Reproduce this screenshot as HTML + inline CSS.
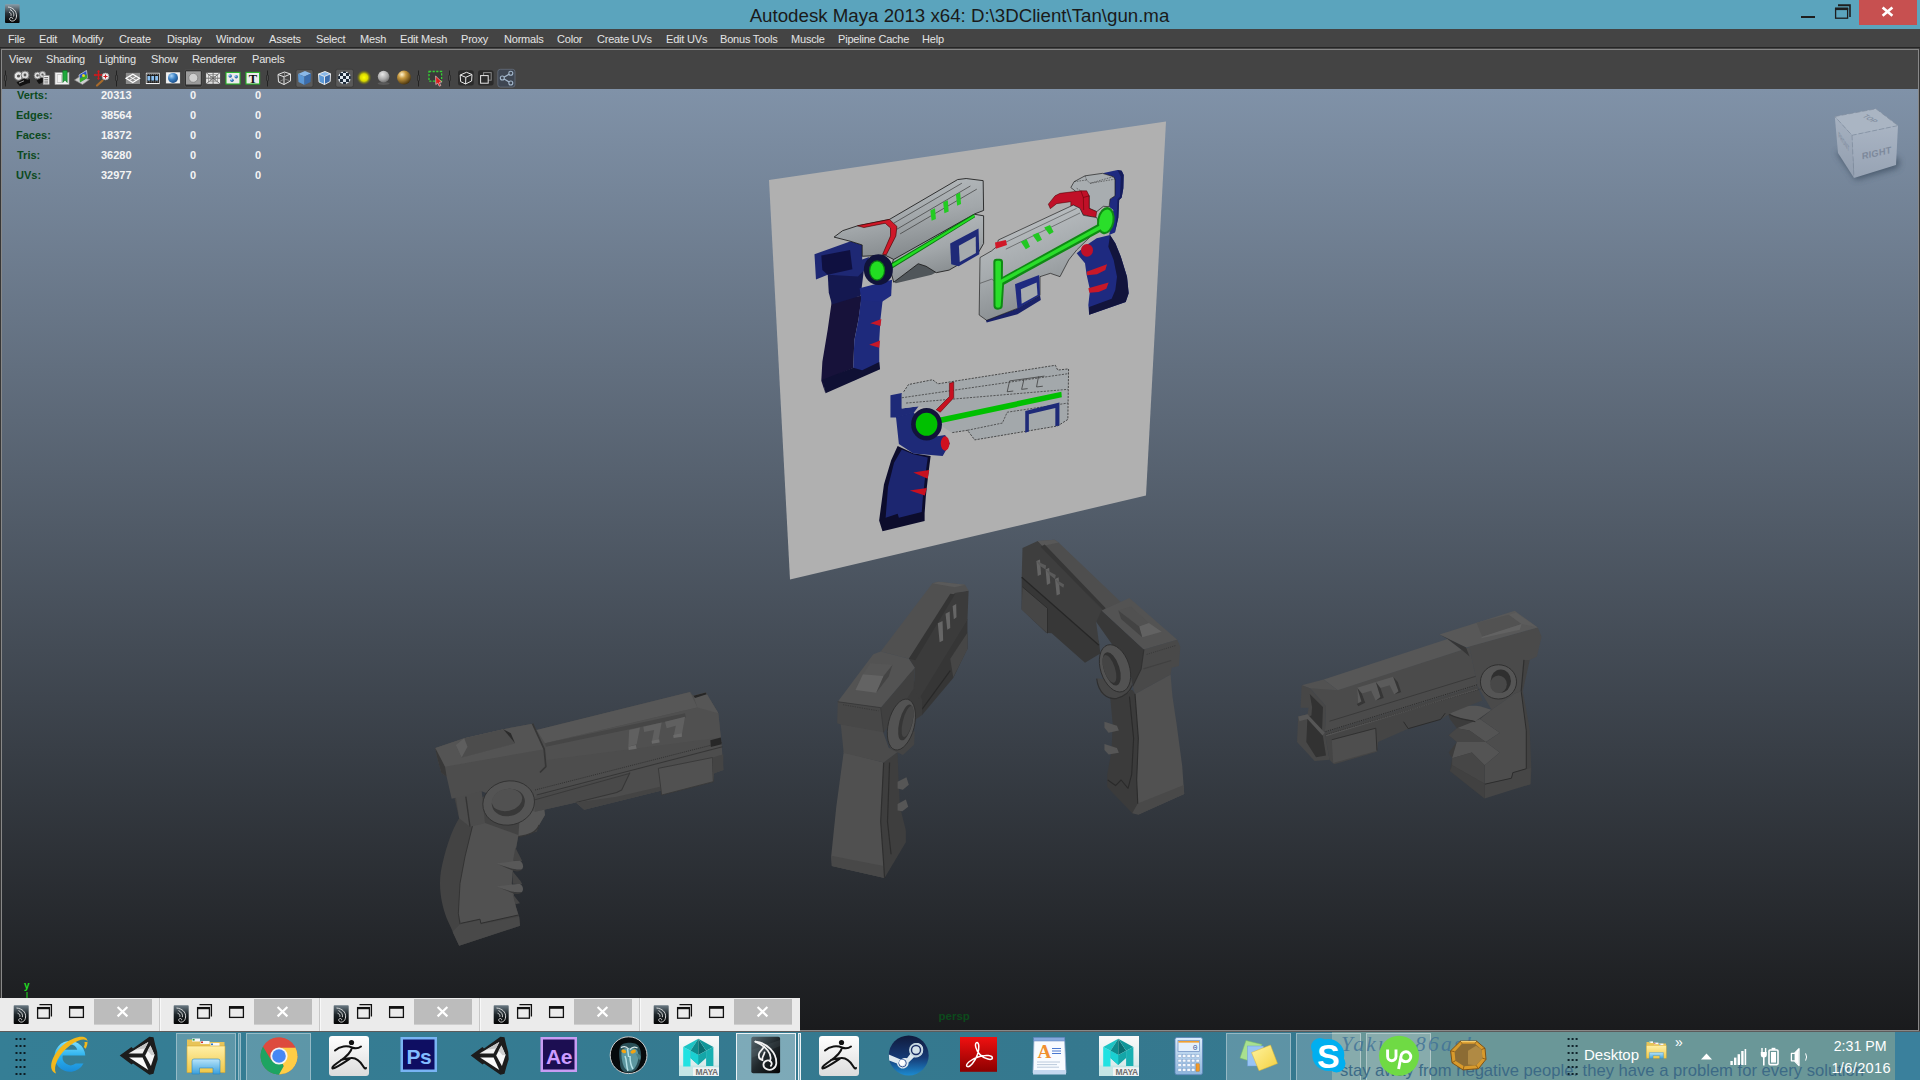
<!DOCTYPE html>
<html>
<head>
<meta charset="utf-8">
<title>Autodesk Maya 2013 x64: D:\3DClient\Tan\gun.ma</title>
<style>
html,body{margin:0;padding:0;}
body{width:1920px;height:1080px;overflow:hidden;position:relative;background:#444;font-family:"Liberation Sans",sans-serif;}
#root{position:absolute;left:0;top:0;width:1920px;height:1080px;overflow:hidden;}
.abs{position:absolute;}
#titlebar{left:0;top:0;width:1920px;height:29px;background:#5ba4bd;}
#title{left:0;top:4px;width:1919px;text-align:center;font-size:18.7px;line-height:24px;color:#1a1a1a;white-space:pre;}
#menubar{left:0;top:29px;width:1920px;height:19px;background:#444444;}
.mi{position:absolute;font-size:11px;line-height:14px;color:#e4e4e4;white-space:nowrap;letter-spacing:-0.2px;}
#menubar .mi{top:3px;}
#panelframe{left:1px;top:49px;width:1916px;height:980px;background:#444444;border:1px solid #888888;}
#mbline{left:0;top:47px;width:1920px;height:1px;background:#262626;}
#panelmenu .mi{top:52px;}
#viewport{left:2px;top:89px;width:1916px;height:941px;background:linear-gradient(to bottom,#8092a8,#1a1b1d);overflow:hidden;}
#vpsvg{left:0;top:0;width:1920px;height:1080px;}
#taskbar{left:0;top:1032px;width:1920px;height:48px;background:linear-gradient(to right,#357e95,#35788e 55%,#377a92);}
.tbtn{position:absolute;top:1033px;height:47px;box-sizing:border-box;background:rgba(255,255,255,0.2);border:1px solid rgba(255,255,255,0.35);border-bottom:none;}
.tbtn.act{background:rgba(255,255,255,0.36);border-color:rgba(255,255,255,0.85);}
.st{position:absolute;font-size:11px;line-height:14px;font-weight:bold;white-space:nowrap;}
.sl{color:#0b4a1c;}
.sv{color:#f4f4f4;}
</style>
</head>
<body>
<div id="root">
<!-- TITLE BAR -->
<div id="titlebar" class="abs"></div>
<div id="title" class="abs">Autodesk Maya 2013 x64: D:\3DClient\Tan\gun.ma</div>
<!-- window controls -->
<div class="abs" style="left:1859px;top:0;width:58px;height:25px;background:#c75050;"></div>
<svg class="abs" style="left:1790px;top:0" width="130" height="29" viewBox="1790 0 130 29">
<rect x="1801" y="16" width="14" height="2" fill="#1e1e1e"/>
<path d="M1838,5 H1850 V17 M1838,5.5 H1850" fill="none" stroke="#1e1e1e" stroke-width="1.6"/>
<rect x="1835.6" y="8.6" width="12" height="9.6" fill="none" stroke="#1e1e1e" stroke-width="1.3"/>
<rect x="1835" y="7.5" width="13.2" height="2.6" fill="#1e1e1e"/>
<path d="M1882.6,7.4 L1892.4,15.8 M1892.4,7.4 L1882.6,15.8" stroke="#ffffff" stroke-width="2.6"/>
</svg>
<!-- maya title icon -->
<svg class="abs" style="left:4px;top:3px" width="17" height="21" viewBox="0 0 17 21">
<defs><linearGradient id="mayaIc" x1="0" y1="0" x2="0" y2="1"><stop offset="0" stop-color="#8c9ca6"/><stop offset="0.5" stop-color="#2a3238"/><stop offset="1" stop-color="#050505"/></linearGradient></defs>
<rect x="1" y="1.3" width="14.6" height="18.6" rx="1" fill="url(#mayaIc)"/>
<path d="M4,4 C9,4.5 12.5,8 12.5,13 C12.5,16.5 10,18.5 7.5,18 C5.5,17.5 5,15.5 6.5,14.5 C8,14 9,15 8.6,16 M6,6.5 C9,8 10.5,10.5 9.5,13.5 M5,9 C6.5,9.5 7.5,11 7,12.8" fill="none" stroke="#e8e8e8" stroke-width="0.9"/>
</svg>
<!-- MENUBAR -->
<div id="menubar" class="abs">
<span class="mi" style="left:8px">File</span>
<span class="mi" style="left:39px">Edit</span>
<span class="mi" style="left:72px">Modify</span>
<span class="mi" style="left:119px">Create</span>
<span class="mi" style="left:167px">Display</span>
<span class="mi" style="left:216px">Window</span>
<span class="mi" style="left:269px">Assets</span>
<span class="mi" style="left:316px">Select</span>
<span class="mi" style="left:360px">Mesh</span>
<span class="mi" style="left:400px">Edit Mesh</span>
<span class="mi" style="left:461px">Proxy</span>
<span class="mi" style="left:504px">Normals</span>
<span class="mi" style="left:557px">Color</span>
<span class="mi" style="left:597px">Create UVs</span>
<span class="mi" style="left:666px">Edit UVs</span>
<span class="mi" style="left:720px">Bonus Tools</span>
<span class="mi" style="left:791px">Muscle</span>
<span class="mi" style="left:838px">Pipeline Cache</span>
<span class="mi" style="left:922px">Help</span>
</div>
<!-- PANEL FRAME -->
<div id="mbline" class="abs"></div>
<div class="abs" style="left:0;top:48px;width:1px;height:983px;background:#363636;"></div><div class="abs" style="left:1919px;top:48px;width:1px;height:983px;background:#363636;"></div>
<div id="panelframe" class="abs"></div>
<div id="panelmenu">
<span class="mi" style="left:9px">View</span>
<span class="mi" style="left:46px">Shading</span>
<span class="mi" style="left:99px">Lighting</span>
<span class="mi" style="left:151px">Show</span>
<span class="mi" style="left:192px">Renderer</span>
<span class="mi" style="left:252px">Panels</span>
</div>
<!-- TOOLBAR ICONS -->
<svg class="abs" style="left:0;top:60px" width="540" height="30" viewBox="0 60 540 30">
<defs>
<radialGradient id="gBlue" cx="0.35" cy="0.3" r="0.75"><stop offset="0" stop-color="#a8d4f8"/><stop offset="0.5" stop-color="#3a80c4"/><stop offset="1" stop-color="#1a4c86"/></radialGradient>
<radialGradient id="gYel" cx="0.5" cy="0.5" r="0.5"><stop offset="0" stop-color="#ffff00"/><stop offset="0.5" stop-color="#d8d800"/><stop offset="1" stop-color="#6a6a10" stop-opacity="0"/></radialGradient>
<radialGradient id="gGrey" cx="0.4" cy="0.3" r="0.75"><stop offset="0" stop-color="#e8e8e8"/><stop offset="0.6" stop-color="#a8a8a8"/><stop offset="1" stop-color="#6a6a6a"/></radialGradient>
<radialGradient id="gGold" cx="0.35" cy="0.28" r="0.8"><stop offset="0" stop-color="#fff4d0"/><stop offset="0.35" stop-color="#c89a40"/><stop offset="1" stop-color="#3a2808"/></radialGradient>
</defs>
<!-- separators -->
<g stroke="#222" stroke-width="1" fill="none">
<path d="M5.5,70.5V86.5M116.5,70.5V86.5M267.5,70.5V86.5M418.5,70.5V86.5M449.5,70.5V86.5"/>
</g>
<g fill="#555" stroke="#222" stroke-width="0.8">
<rect x="4.6" y="75" width="1.8" height="6" rx="0.9"/><rect x="115.6" y="75" width="1.8" height="6" rx="0.9"/><rect x="266.6" y="75" width="1.8" height="6" rx="0.9"/><rect x="417.6" y="75" width="1.8" height="6" rx="0.9"/><rect x="448.6" y="75" width="1.8" height="6" rx="0.9"/>
</g>
<!-- camera -->
<g>
<circle cx="18.5" cy="76" r="4.3" fill="#e6e6e6" stroke="#777" stroke-width="1"/><circle cx="18.5" cy="76" r="1.6" fill="#555"/>
<circle cx="25" cy="75" r="4" fill="#d8d8d8" stroke="#777" stroke-width="1"/><circle cx="25" cy="75" r="1.4" fill="#555"/>
<path d="M16.5,82.5 L24.5,78.5 L27.5,80 L30,79 L30,83 L27.5,83.5 L20,86.5 Z" fill="#111"/>
<path d="M19,83 L24,80.8" stroke="#999" stroke-width="1"/>
</g>
<!-- camera + doc -->
<g>
<circle cx="37.5" cy="75.5" r="3.4" fill="#e0e0e0" stroke="#777" stroke-width="0.9"/><circle cx="37.5" cy="75.5" r="1.2" fill="#555"/>
<circle cx="42.5" cy="74.5" r="3.2" fill="#d4d4d4" stroke="#777" stroke-width="0.9"/><circle cx="42.5" cy="74.5" r="1.1" fill="#555"/>
<path d="M36.5,80.5 L42,77.8 L44,79 L44,81.8 L39,84 Z" fill="#111"/>
<rect x="43.2" y="75.5" width="6" height="9" fill="#f2f2f2" stroke="#888" stroke-width="0.6"/>
<path d="M44.3,77.5h3.8M44.3,79.3h3.8M44.3,81.1h3.8M44.3,82.9h3.8" stroke="#555" stroke-width="0.8"/>
</g>
<!-- bookmark -->
<g>
<rect x="55" y="72.5" width="14" height="12" fill="#f4f4f4" stroke="#999" stroke-width="0.7"/>
<rect x="57.3" y="74.5" width="4.2" height="8" fill="none" stroke="#c8c8c8" stroke-width="1"/>
<path d="M62.8,70.5 L67.2,70.5 L67.2,82.5 L65,80 L62.8,82.5 Z" fill="#1ea83c" stroke="#0d6a22" stroke-width="0.6"/>
</g>
<!-- image plane -->
<g>
<path d="M74.5,80 L79,77 L89.5,79.5 L82.5,84.5 Z" fill="#cfcfcf" stroke="#888" stroke-width="0.6"/>
<path d="M79,75 L86.5,70.5 L87.5,78 L80,82.5 Z" fill="#2c54c8" stroke="#ddd" stroke-width="0.7"/>
<path d="M79.6,78.5 L86.9,74.2 L87.5,78 L80,82.5 Z" fill="#3aa82e"/>
<circle cx="83.5" cy="75.6" r="1.5" fill="#e8d820"/>
</g>
<!-- red cross + magnifier -->
<g>
<path d="M98.5,70.5V79.5M94,75H103" stroke="#d0181c" stroke-width="1.4"/>
<path d="M98.5,70 L97,72 H100 Z M98.5,80 L97,78 H100 Z M93.6,75 L95.6,73.5 V76.5 Z M103.4,75 L101.4,73.5 V76.5 Z" fill="#d0181c"/>
<path d="M102.5,80.5 L97,85.5" stroke="#a86a2a" stroke-width="2.2" stroke-linecap="round"/>
<circle cx="105.5" cy="76.5" r="3.4" fill="#f6f6f6" stroke="#999" stroke-width="0.8"/>
<path d="M105.5,74.4V78.6M103.4,76.5H107.6" stroke="#d0181c" stroke-width="1.2"/>
</g>
<!-- grid -->
<g>
<rect x="125.3" y="72.3" width="15" height="12" fill="#8c8c8c" stroke="#333" stroke-width="0.6"/>
<path d="M126,78.3 L132.8,74.2 L139.6,78.3 L132.8,82.5 Z" fill="none" stroke="#fff" stroke-width="1.2"/>
<path d="M129.4,76.3 L136.2,80.4 M136.2,76.3 L129.4,80.4" stroke="#fff" stroke-width="0.9"/>
</g>
<!-- film gate -->
<g>
<rect x="145.5" y="72.3" width="14.5" height="12" fill="#f4f4f4" stroke="#333" stroke-width="0.6"/>
<rect x="146.6" y="73.6" width="12.3" height="9.4" fill="#111"/>
<rect x="147.4" y="76" width="2.8" height="4.6" fill="#8cc0f0"/><rect x="151.3" y="76" width="2.8" height="4.6" fill="#8cc0f0"/><rect x="155.2" y="76" width="2.8" height="4.6" fill="#8cc0f0"/>
<path d="M147.3,74.7h10.8M147.3,81.9h10.8" stroke="#ddd" stroke-width="0.8" stroke-dasharray="1 1"/>
</g>
<!-- blue ball -->
<g>
<rect x="165.8" y="72" width="14.4" height="11.8" fill="#f2f2f2" stroke="#333" stroke-width="0.5"/>
<circle cx="173" cy="77.9" r="5" fill="url(#gBlue)"/>
</g>
<!-- selected circle -->
<g>
<rect x="184.6" y="69.8" width="17.6" height="17.2" rx="2" fill="#2e2e2e" stroke="#5a5a5a" stroke-width="0.6"/>
<rect x="186" y="71.3" width="14.8" height="13.2" fill="#9c9c9c"/>
<circle cx="193.3" cy="77.8" r="4.5" fill="#cfcfcf" stroke="#777" stroke-width="0.7"/>
</g>
<!-- field chart -->
<g>
<rect x="205.8" y="72.3" width="14.6" height="11.8" fill="#e8e8e8" stroke="#333" stroke-width="0.6"/>
<path d="M206,72.5 L220.2,84 M220.2,72.5 L206,84 M213.1,72.4V84 M206,78.2H220.3" stroke="#555" stroke-width="0.8"/>
<rect x="208.6" y="74.6" width="9" height="7.2" fill="none" stroke="#777" stroke-width="0.6"/>
<rect x="210.8" y="76.3" width="4.6" height="3.8" fill="none" stroke="#777" stroke-width="0.6"/>
</g>
<!-- green box balls -->
<g>
<rect x="226" y="72.4" width="14" height="11.6" fill="#ececec" stroke="#28b428" stroke-width="1.1"/>
<circle cx="230.2" cy="76" r="1.7" fill="url(#gBlue)"/><circle cx="236.2" cy="76.8" r="1.7" fill="url(#gBlue)"/><circle cx="232" cy="80.2" r="1.7" fill="url(#gBlue)"/>
</g>
<!-- green box T -->
<g>
<rect x="246" y="72.4" width="13.6" height="11.6" fill="#ececec" stroke="#28b428" stroke-width="1.1"/>
<text x="252.8" y="82.6" font-family="Liberation Serif,serif" font-size="12.5" font-weight="bold" text-anchor="middle" fill="#111">T</text>
</g>
<!-- wire cube -->
<g fill="none" stroke="#e4e4e4" stroke-width="1">
<path d="M278,74.5 L284.5,72 L290.5,74 L290.5,81 L284,84.5 L278.5,82 Z"/>
<path d="M278,74.5 L284,76.8 L290.5,74 M284,76.8 L284,84.5" />
<path d="M284.5,72 L284.5,79 L278.5,82 M284.5,79 L290.5,81" stroke="#9a9a9a" stroke-width="0.7"/>
</g>
<!-- shaded cube selected -->
<g>
<rect x="296" y="69.6" width="17" height="17.6" rx="2" fill="#5a5a5a" stroke="#333" stroke-width="0.6"/>
<path d="M298,74 L305,71 L311,73.5 L304.5,76.5 Z" fill="#8ab8e8"/>
<path d="M298,74 L304.5,76.5 L304.5,85 L298.5,82 Z" fill="#5c98d6"/>
<path d="M304.5,76.5 L311,73.5 L310.5,82 L304.5,85 Z" fill="#3a6cac"/>
</g>
<!-- wire on shaded cube -->
<g>
<path d="M318.5,74 L325,71.5 L330.5,73.8 L324.5,76.5 Z" fill="#8ab8e8"/>
<path d="M318.5,74 L324.5,76.5 L324.5,84.5 L319,82 Z" fill="#5c98d6"/>
<path d="M324.5,76.5 L330.5,73.8 L330.2,81.5 L324.5,84.5 Z" fill="#3a6cac"/>
<path d="M318.5,74 L325,71.5 L330.5,73.8 L330.2,81.5 L324.5,84.5 L319,82 Z M318.5,74 L324.5,76.5 L330.5,73.8 M324.5,76.5 V84.5" fill="none" stroke="#f4f4f4" stroke-width="0.9"/>
</g>
<!-- textured ball -->
<g>
<rect x="335.7" y="69.3" width="17.7" height="17.8" rx="2" fill="#5a5a5a" stroke="#333" stroke-width="0.6"/>
<circle cx="344.4" cy="77.8" r="6.8" fill="#dde6ee"/>
<path d="M340,73 h3 v3 h-3 Z M346,73 h3 v3 h-3 Z M343,76 h3 v3 h-3 Z M349,76 h2.2 v3 h-2.2 Z M337.6,76 h2.4 v3 h-2.4 Z M340,79 h3 v3 h-3 Z M346,79 h3 v3 h-3 Z M343,82 h3 v2.6 h-3 Z M343,71 h3 v2 h-3 Z" fill="#1c2a3a"/>
<circle cx="344.4" cy="77.8" r="6.8" fill="none" stroke="#5a5a5a" stroke-width="1"/>
</g>
<!-- yellow light -->
<circle cx="364" cy="77.5" r="7.5" fill="url(#gYel)"/>
<!-- grey ball -->
<ellipse cx="383.6" cy="83.5" rx="6" ry="1.5" fill="#5a5a5a"/>
<circle cx="383.6" cy="76.6" r="5.8" fill="url(#gGrey)"/>
<!-- gold ball -->
<circle cx="404" cy="77.6" r="7" fill="url(#gGold)"/>
<!-- select dashed -->
<g>
<rect x="429" y="71.5" width="12.6" height="9.6" fill="#3a3a3a" stroke="#34d234" stroke-width="1.3" stroke-dasharray="2.2 1.4"/>
<path d="M435.6,76 L441.8,82 L439.4,82.4 L440.8,85.6 L439.2,86.2 L437.8,83 L435.8,84.6 Z" fill="#d81c1c" stroke="#fff" stroke-width="0.5"/>
</g>
<!-- dark cube -->
<g>
<rect x="458" y="70.3" width="15.8" height="15.2" rx="2.5" fill="#2a2a2a"/>
<path d="M460.2,75 L466.5,72.3 L472,74.5 L471.6,81 L465.6,84 L460.6,81.6 Z M460.2,75 L465.8,77.3 L472,74.5 M465.8,77.3 L465.6,84" fill="none" stroke="#e8e8e8" stroke-width="1"/>
</g>
<!-- dark 2 squares -->
<g>
<rect x="478" y="70.3" width="15.6" height="15.2" rx="2.5" fill="#2a2a2a"/>
<rect x="483.6" y="72.6" width="7.6" height="7.6" fill="none" stroke="#8a8a8a" stroke-width="1"/>
<rect x="480.6" y="75.6" width="7.6" height="7.6" fill="#2a2a2a" stroke="#e8e8e8" stroke-width="1"/>
</g>
<!-- share -->
<g>
<rect x="497.8" y="69.3" width="17.2" height="17.8" rx="2.5" fill="#3e4652" stroke="#6a7482" stroke-width="0.7"/>
<path d="M502.5,78 L510.5,73.5 M502.5,78 L510.5,82.8" stroke="#a4b8cc" stroke-width="1.2"/>
<circle cx="502.3" cy="78" r="2" fill="#3e4652" stroke="#a4b8cc" stroke-width="1.1"/>
<circle cx="510.8" cy="73.3" r="2" fill="#3e4652" stroke="#a4b8cc" stroke-width="1.1"/>
<circle cx="510.8" cy="83" r="2" fill="#3e4652" stroke="#a4b8cc" stroke-width="1.1"/>
</g>
</svg>
<!-- VIEWPORT -->
<div id="viewport" class="abs"></div>
<svg id="vpsvg" class="abs" width="1920" height="1080" viewBox="0 0 1920 1080">
<defs><clipPath id="vpclip"><rect x="2" y="89" width="1916" height="941"/></clipPath></defs>
<g clip-path="url(#vpclip)">
<!-- image plane -->
<defs>
<linearGradient id="brl1" x1="0" y1="0" x2="0.35" y2="1"><stop offset="0" stop-color="#bcc1c4"/><stop offset="0.6" stop-color="#a2a7aa"/><stop offset="1" stop-color="#858a8d"/></linearGradient>
<linearGradient id="brl2" x1="0" y1="0" x2="0.4" y2="1"><stop offset="0" stop-color="#c6cacd"/><stop offset="0.55" stop-color="#a6abae"/><stop offset="1" stop-color="#84898c"/></linearGradient>
</defs>
<polygon points="769,180 1166,121.5 1146,495.5 790,579.5" fill="#b0b0b0"/>
<!-- ===== plane gun 1 (top-left) : crop origin (800,170) scale 4.695 ===== -->
<g transform="translate(800,170) scale(0.21299)" stroke-linejoin="round">
<!-- grip back dark -->
<path d="M150,610 L290,590 L275,700 L255,800 L250,930 L110,990 L118,1045 L100,990 L105,900 L130,750 Z" fill="#17123a"/>
<!-- grip front blue -->
<path d="M288,590 L388,612 L378,700 L372,800 L372,930 L250,990 L250,930 L255,800 L275,700 Z" fill="#1e2a7c"/>
<!-- grip base -->
<path d="M105,985 L250,928 L292,940 L372,902 L376,935 L120,1048 Z" fill="#0f1034"/>
<path d="M330,720 L382,700 L378,732 Z M325,820 L376,800 L372,834 Z" fill="#c81828"/>
<!-- lower rear block -->
<path d="M130,485 L275,455 L300,470 L285,590 L150,632 L135,575 Z" fill="#141850"/>
<!-- navy rear block -->
<path d="M68,395 L238,335 L292,352 L292,420 L325,408 L302,470 L272,500 L130,492 L75,514 Z" fill="#1e2874"/>
<path d="M100,402 L235,376 L246,466 L130,492 L105,470 Z" fill="#0f1040"/>
<!-- blue collar under ring -->
<path d="M280,555 L432,515 L428,590 L385,618 L288,612 Z" fill="#1e2a80"/>
<!-- dark underside of barrel -->
<path d="M440,525 L555,438 L592,450 L640,480 L618,492 L450,532 Z" fill="#50565a"/>
<!-- lower barrel grey -->
<path d="M425,470 L440,415 L820,208 L862,215 L862,345 L835,392 L700,470 L640,482 L592,452 L555,440 L440,527 Z" fill="url(#brl1)" stroke="#1a1a1a" stroke-width="4"/>
<!-- upper slide grey -->
<path d="M160,315 L200,285 L270,262 L420,232 L740,45 L780,40 L860,50 L862,190 L820,206 L440,420 L400,400 L292,405 L292,352 L238,335 Z" fill="url(#brl1)" stroke="#1a1a1a" stroke-width="4"/>
<path d="M440,250 L760,62 M455,278 L800,75 M470,300 L830,90" stroke="#303030" stroke-width="3" fill="none"/>
<!-- navy box -->
<path d="M705,345 L838,275 L842,395 L745,452 L710,442 Z" fill="#1f2a78"/>
<path d="M746,356 L825,312 L826,390 L750,432 Z" fill="#a6abae"/>
<!-- red strap -->
<path d="M270,262 L420,232 L455,265 L450,310 L405,398 L388,396 L425,310 L425,272 L400,250 L300,270 Z" fill="#d01828" stroke="#400" stroke-width="3"/>
<!-- green vents -->
<path d="M612,190 L634,180 L638,230 L618,238 Z M672,152 L694,142 L698,195 L678,203 Z M732,115 L752,106 L756,160 L738,168 Z" fill="#22cc22"/>
<!-- green line -->
<path d="M398,456 L816,207 L822,222 L408,478 Z" fill="#0a7a10"/>
<path d="M400,461 L817,211 L820,219 L406,473 Z" fill="#22dd22"/>
<!-- pivot ring -->
<ellipse cx="368" cy="468" rx="68" ry="72" fill="#10133a"/>
<ellipse cx="362" cy="472" rx="38" ry="48" fill="#0a7a10"/>
<ellipse cx="362" cy="472" rx="32" ry="42" fill="#22dd22"/>
</g>
<!-- ===== plane gun 2 (top-right) : crop origin (970,160) scale 6 ===== -->
<g transform="translate(970,160) scale(0.1666667)" stroke-linejoin="round">
<!-- grip navy -->
<path d="M640,560 L700,510 L760,470 L840,450 L872,500 L905,580 L942,700 L952,800 L934,852 L715,928 L710,870 L720,780 L700,690 L690,620 Z" fill="#1e2a80"/>
<path d="M840,450 L872,500 L905,580 L942,700 L952,800 L934,852 L715,928 L715,882 L850,832 L872,780 L882,700 L862,600 L830,520 Z" fill="#12143c"/>
<path d="M700,670 L822,625 L812,660 L762,686 L702,692 Z M710,770 L832,735 L818,772 L772,792 L716,797 Z" fill="#c81828"/>
<ellipse cx="702" cy="542" rx="36" ry="38" fill="#c01028"/>
<!-- navy back strip -->
<path d="M795,80 L885,60 L910,65 L922,90 L920,170 L910,225 L895,240 L890,345 L870,435 L835,450 L860,300 L835,280 L840,235 L870,215 L870,115 L860,100 Z" fill="#1e2a80"/>
<path d="M885,60 L910,65 L922,90 L920,170 L910,225 L895,240 L890,345 L870,435 L880,340 L885,235 L900,220 L905,100 Z" fill="#151c5a"/>
<!-- rear top grey -->
<path d="M605,165 L625,130 L690,95 L795,80 L860,100 L870,115 L870,215 L840,235 L835,280 L800,278 L760,310 L715,290 L715,215 L680,225 Z" fill="#a8adb0" stroke="#1a1a1a" stroke-width="4"/>
<path d="M625,130 L700,120 L720,140 L860,100 M700,120 L690,95 M640,170 L715,215 M720,140 L870,115" fill="none" stroke="#222" stroke-width="3" stroke-dasharray="10 6"/>
<!-- red bracket -->
<path d="M470,265 L510,215 L540,200 L665,185 L700,185 L715,215 L715,290 L760,310 L755,345 L730,345 L660,320 L655,295 L605,280 L605,250 L520,262 L482,292 Z" fill="#c01028" stroke="#400" stroke-width="3"/>
<path d="M665,185 L680,225 L715,215 M680,225 L682,300" fill="none" stroke="#500" stroke-width="3"/>
<!-- navy bottom strip -->
<path d="M95,960 L280,892 L420,812 L425,840 L285,925 L100,975 Z" fill="#1a2268"/>
<!-- main barrel grey -->
<path d="M60,585 L130,545 L160,520 L170,480 L620,270 L660,290 L680,332 L760,345 L782,400 L740,442 L640,540 L592,600 L540,700 L482,680 L420,700 L420,812 L280,892 L100,962 L55,930 Z" fill="url(#brl2)" stroke="#1a1a1a" stroke-width="4"/>
<path d="M200,500 L640,290 M215,535 L660,318" stroke="#303030" stroke-width="3" fill="none"/>
<path d="M60,740 L130,715 L200,760" stroke="#303030" stroke-width="3" fill="none"/>
<!-- small red block -->
<path d="M150,495 L215,480 L222,510 L155,532 Z" fill="#d01828"/>
<!-- navy box -->
<path d="M270,745 L415,690 L420,812 L285,892 Z" fill="#1e2a80"/>
<path d="M305,775 L400,735 L405,810 L310,862 Z" fill="#a6abae"/>
<!-- green vents -->
<path d="M305,490 L340,475 L360,520 L335,535 Z M375,450 L410,435 L432,478 L405,492 Z M445,405 L480,390 L502,432 L476,447 Z" fill="#22c822"/>
<!-- green T glow -->
<path d="M140,612 Q140,592 160,592 L178,592 Q198,592 198,612 L197,700 L790,372 L805,418 L204,748 L196,878 Q194,898 168,898 Q142,898 141,876 Z" fill="#0f8a14"/>
<ellipse cx="815" cy="364" rx="52" ry="82" transform="rotate(10 815 364)" fill="#0f8a14"/>
<path d="M152,614 Q152,604 162,604 L176,604 Q186,604 186,614 L185,718 L792,386 L800,406 L194,736 L184,874 Q183,886 168,886 Q154,886 153,874 Z" fill="#2ade2a"/>
<ellipse cx="815" cy="364" rx="40" ry="68" transform="rotate(10 815 364)" fill="#2ade2a"/>
</g>
<!-- ===== plane gun 3 (bottom) : crop origin (740,340) scale 4.1543 ===== -->
<g transform="translate(740,340) scale(0.240714)" stroke-linejoin="round">
<!-- grip -->
<path d="M655,440 L720,470 L792,482 L782,560 L772,650 L767,720 L767,752 L592,794 L578,750 L598,600 L628,500 Z" fill="#0c0c2c"/>
<path d="M672,455 L720,475 L780,488 L770,560 L760,650 L755,715 L660,738 L655,722 L605,738 L615,610 L640,510 Z" fill="#1c2670"/>
<path d="M720,550 L786,540 L780,576 Z M705,625 L776,615 L768,646 Z" fill="#c81020"/>
<!-- navy collar -->
<path d="M648,320 L720,300 L820,400 L852,395 L872,430 L842,482 L720,472 L660,432 Z" fill="#1e2a78"/>
<ellipse cx="852" cy="430" rx="18" ry="30" fill="#d01020"/>
<!-- navy rear -->
<path d="M625,230 L672,220 L672,285 L742,275 L722,302 L650,322 L625,322 Z" fill="#1e2a78"/>
<!-- grey barrel -->
<path d="M680,215 L700,185 L800,165 L822,182 L1310,105 L1320,125 L1365,120 L1362,330 L1320,357 L975,415 L945,375 L880,385 L820,345 L800,290 L742,275 L672,285 L672,225 Z" fill="#a3a8ab"/>
<path d="M680,215 L700,185 L800,165 L822,182 L1310,105 L1320,125 L1365,120 L1362,330 L1320,357 L975,415 L945,375 L880,385" fill="none" stroke="#222" stroke-width="3" stroke-dasharray="9 5"/>
<path d="M672,240 L1362,140 M690,262 L1362,205 M945,375 L1090,345 L1110,300 L1362,262" fill="none" stroke="#333" stroke-width="3" stroke-dasharray="9 5"/>
<!-- vents outline -->
<path d="M1120,170 L1110,215 L1135,212 M1180,162 L1170,205 L1195,202 M1240,152 L1232,195 L1258,192 M1120,170 L1265,150" fill="none" stroke="#333" stroke-width="3"/>
<!-- navy box outline -->
<path d="M1185,295 L1327,260 L1327,355 L1310,358 L1310,282 L1200,308 L1200,380 L1185,385 Z" fill="#1e2a78"/>
<!-- red strap -->
<path d="M870,180 L888,175 L888,240 L832,300 L815,290 L870,235 Z" fill="#c81020" stroke="#400" stroke-width="2"/>
<!-- green line -->
<path d="M815,325 L1335,215 L1337,238 L822,348 Z" fill="#00c000"/>
<!-- ring -->
<ellipse cx="775" cy="350" rx="64" ry="68" fill="#12143a"/>
<ellipse cx="775" cy="350" rx="45" ry="48" fill="#00c000"/>
</g>
<!-- left 3D gun : coords from crop origin (420,680) scale 6 -->
<g transform="translate(420,680) scale(0.1666667)" stroke-linejoin="round">
<!-- grip side (dark back) -->
<path d="M205,700 L235,830 C190,900 150,1020 125,1150 C110,1250 130,1350 160,1430 L235,1595 L600,1475 L595,1420 L570,1340 L550,1220 L560,1080 L590,940 L640,925 L700,910 L720,860 L750,810 L745,770 L400,700 Z" fill="#434343"/>
<!-- grip front panel -->
<path d="M320,855 L370,850 L590,930 L565,1080 L550,1220 L575,1360 L590,1410 L365,1460 L360,1435 L245,1460 L230,1400 L240,1220 L270,1060 Z" fill="#515151"/>
<!-- grip base -->
<path d="M195,1510 L235,1595 L600,1475 L595,1420 L365,1465 L360,1440 L240,1465 Z" fill="#494949"/>
<path d="M245,1460 L360,1435 L365,1460 L590,1410" fill="none" stroke="#2a2a2a" stroke-width="5"/>
<path d="M320,855 L270,1060 L240,1220 L230,1400 L240,1465" fill="none" stroke="#2f2f2f" stroke-width="5"/>
<!-- trigger guard bulge -->
<path d="M590,940 C650,930 700,915 715,870 L750,810 L745,770 L600,800 Z" fill="#565656"/>
<path d="M590,940 C650,930 700,915 715,870" fill="none" stroke="#363636" stroke-width="8"/>
<!-- finger spikes -->
<path d="M572,1005 L614,1088 L600,1087 L558,1084 Z M554,1146 L602,1205 L614,1226 L556,1222 Z M556,1284 L600,1340 L572,1345 Z" fill="#454545"/>
<path d="M465,1100 C520,1092 570,1086 600,1085 C620,1098 623,1124 612,1136 C590,1146 540,1130 465,1104 Z" fill="#585858"/>
<path d="M465,1104 C540,1130 590,1146 612,1136 C602,1152 572,1152 548,1140 Z" fill="#3a3a3a"/>
<path d="M465,1238 C520,1230 570,1225 600,1224 C620,1236 623,1260 612,1272 C590,1282 540,1268 465,1242 Z" fill="#585858"/>
<path d="M465,1242 C540,1268 590,1282 612,1272 C602,1288 572,1288 548,1276 Z" fill="#3a3a3a"/>
<!-- neck between slide and grip -->
<path d="M215,700 L370,665 L390,860 L300,880 L235,830 Z" fill="#4c4c4c"/>
<path d="M275,700 L300,880" stroke="#343434" stroke-width="8"/>
<!-- main upper body silhouette -->
<path d="M92,408 L265,350 L500,295 L675,262 L700,300 L1620,72 L1640,95 L1715,75 L1790,200 L1805,345 L1810,385 L1820,540 L1765,560 L1760,610 L1450,690 L1445,665 L985,778 L935,735 L690,790 L370,668 L190,712 L160,580 L128,558 L100,455 Z" fill="#4d4d4d"/>
<!-- back face of slide (darker) -->
<path d="M92,408 L100,455 L128,558 L160,580 L150,520 L135,440 Z" fill="#383838"/>
<!-- rear block top bevel -->
<path d="M265,350 L500,295 L570,380 L250,465 L215,390 Z" fill="#585858"/>
<path d="M500,295 L570,380 L545,320 Z" fill="#2f2f2f"/>
<!-- rear block top face -->
<path d="M92,408 L265,350 L215,390 L250,465 L570,380 L500,295 L675,262 L745,415 L150,520 Z" fill="#545454"/>
<path d="M265,350 L500,295 L570,380 L250,465 Z" fill="#4c4c4c"/>
<path d="M265,350 L215,390 L250,465 L285,400 Z" fill="#5e5e5e"/>
<path d="M500,295 L545,320 L570,380 Z" fill="#2b2b2b"/>
<!-- rear block shadow edge -->
<path d="M675,262 L745,415 L755,520 L720,555" fill="none" stroke="#363636" stroke-width="10"/>
<!-- barrel top faces -->
<path d="M700,300 L1620,72 L1665,165 L750,380 Z" fill="#575757"/>
<path d="M750,380 L1665,165 L1640,95 L1715,75 L1790,200 L1805,345 L760,480 Z" fill="#505050"/>
<path d="M750,380 L1590,200 L1595,225 L755,400 Z" fill="#464646"/>
<path d="M1640,95 L1715,75 L1790,200 L1665,165 Z" fill="#565656"/>
<path d="M1640,95 L1715,75 L1720,85 L1650,108 Z" fill="#262626"/>
<!-- vents -->
<path d="M1255,300 L1320,285 L1300,385 L1250,400 Z M1340,280 L1450,255 L1430,365 L1390,375 L1405,300 L1345,312 Z M1470,250 L1590,220 L1570,335 L1520,345 L1535,275 L1480,290 Z" fill="#606060"/>
<path d="M1250,400 L1295,390 L1300,412 L1252,420 Z M1390,365 L1435,355 L1438,375 L1392,382 Z M1520,330 L1570,320 L1572,340 L1522,348 Z" fill="#6a6a6a"/>
<!-- slide / frame separation -->
<path d="M690,660 L1810,375" stroke="#2b2b2b" stroke-width="5" stroke-dasharray="6 6"/>
<path d="M700,690 L1815,400" stroke="#363636" stroke-width="6"/>
<path d="M1805,345 L1810,385 L1745,402 L1742,362 Z" fill="#272727"/>
<!-- lower frame -->
<path d="M690,700 L1260,555 L1210,660 L1180,675 L935,735 L690,790 Z" fill="#494949"/>
<path d="M1260,555 L1210,660 L1180,675 L935,735" fill="none" stroke="#363636" stroke-width="6"/>
<path d="M935,735 L985,778 L1445,665 L1440,640 L1180,700 Z" fill="#444444"/>
<!-- under barrel box -->
<path d="M1430,530 L1755,465 L1760,610 L1450,690 Z" fill="#515151"/>
<path d="M1430,530 L1755,465 L1760,610 L1450,690 Z" fill="none" stroke="#363636" stroke-width="5"/>
<path d="M1755,465 L1820,445 L1820,540 L1765,560 L1760,610 Z" fill="#444444"/>
<!-- ring -->
<ellipse cx="532" cy="738" rx="156" ry="132" transform="rotate(-12 532 738)" fill="#545454" stroke="#2f2f2f" stroke-width="5"/>
<ellipse cx="530" cy="735" rx="100" ry="82" transform="rotate(-12 530 735)" fill="#383838"/>
<ellipse cx="522" cy="720" rx="92" ry="66" transform="rotate(-12 522 720)" fill="#515151"/>
<path d="M685,720 L1260,560" stroke="#363636" stroke-width="5"/>
</g>
<!-- middle-left 3D gun : crop origin (820,570) scale 3.3778 -->
<g transform="translate(820,570) scale(0.29605)" stroke-linejoin="round">
<!-- grip side -->
<path d="M215,650 L262,615 L265,700 L270,800 L290,880 L290,920 L218,1040 L215,990 L205,850 Z" fill="#3e3e3e"/>
<!-- grip back face -->
<path d="M80,615 L215,650 L205,850 L215,990 L218,1040 L40,1000 L38,965 L55,800 Z" fill="#505050"/>
<path d="M38,965 L215,1000 L218,1040 L40,1000 Z" fill="#484848"/>
<path d="M215,650 L205,850 L215,990 L218,1040" fill="none" stroke="#2f2f2f" stroke-width="4"/>
<path d="M235,650 L228,850 L240,960" fill="none" stroke="#2c2c2c" stroke-width="4"/>
<!-- spikes -->
<path d="M262,715 L292,700 L300,725 L280,742 L262,738 Z M262,790 L290,775 L298,800 L278,815 L262,812 Z" fill="#565656"/>
<!-- neck -->
<path d="M70,520 L212,545 L232,600 L262,615 L215,650 L80,618 Z" fill="#4b4b4b"/>
<!-- lower frame side -->
<path d="M335,430 L498,165 L498,265 L450,365 L345,490 L305,480 Z" fill="#363636"/>
<path d="M440,300 L498,212 L498,268 L450,362 Z" fill="#464646"/>
<path d="M345,470 L440,340" stroke="#282828" stroke-width="4"/>
<!-- trigger guard bulge under ring -->
<path d="M228,560 L320,545 L318,590 L280,625 L238,605 Z" fill="#444444"/>
<!-- fill gap -->
<path d="M300,330 L345,440 L345,490 L300,520 L240,520 Z" fill="#3b3b3b"/>
<!-- barrel side -->
<path d="M300,300 L455,75 L502,70 L498,168 L335,435 L318,400 L320,330 Z" fill="#3b3b3b"/>
<!-- barrel top -->
<path d="M205,275 L380,45 L400,40 L490,50 L502,70 L455,78 L300,300 Z" fill="#505050"/>
<path d="M300,300 L440,80 L456,82 L322,305 Z" fill="#343434"/>
<path d="M380,45 L400,40 L490,50 L455,58 Z" fill="#5a5a5a"/>
<!-- vents -->
<path d="M398,180 L414,172 L416,238 L404,244 Z M424,148 L438,140 L440,196 L430,202 Z M448,122 L460,115 L461,160 L452,166 Z" fill="#666666"/>
<!-- rear block side -->
<path d="M205,465 L320,330 L316,400 L238,520 L215,548 Z" fill="#404040"/>
<!-- rear block top -->
<path d="M60,445 L180,285 L205,275 L300,300 L320,330 L205,465 Z" fill="#535353"/>
<path d="M145,352 L170,315 L245,320 L215,358 Z" fill="#565656"/>
<path d="M120,405 L145,352 L215,358 L190,415 Z" fill="#636363"/>
<path d="M190,415 L215,358 L245,320 L232,360 Z" fill="#444444"/>
<!-- rear block back face -->
<path d="M60,445 L205,465 L215,548 L70,522 L58,518 Z" fill="#474747"/>
<path d="M78,455 L198,476" stroke="#363636" stroke-width="3" stroke-dasharray="4 4"/>
<path d="M60,445 L205,465 L215,548" fill="none" stroke="#383838" stroke-width="3"/>
<!-- ring -->
<ellipse cx="275" cy="522" rx="44" ry="88" transform="rotate(14 275 522)" fill="#535353" stroke="#2f2f2f" stroke-width="3"/>
<ellipse cx="290" cy="515" rx="22" ry="62" transform="rotate(14 290 515)" fill="#363636"/>
<ellipse cx="296" cy="512" rx="16" ry="54" transform="rotate(14 296 512)" fill="#464646"/>
</g>
<!-- middle-right 3D gun : crop origin (1010,530) scale 3.6 -->
<g transform="translate(1010,530) scale(0.277778)" stroke-linejoin="round">
<!-- grip left side (dark) -->
<path d="M360,595 L440,575 L452,590 L462,750 L456,900 L462,1022 L440,1020 L350,925 L350,880 L365,800 L370,700 Z" fill="#3b3b3b"/>
<!-- grip back face -->
<path d="M450,590 L578,520 L585,600 L600,700 L620,850 L627,950 L462,1024 L456,900 L462,750 Z" fill="#515151"/>
<path d="M460,985 L626,918 L627,950 L462,1025 L440,1020 Z" fill="#494949"/>
<path d="M450,590 L462,750 L456,900 L460,985" fill="none" stroke="#2c2c2c" stroke-width="4"/>
<path d="M430,600 L445,750 L438,880 L425,930 L400,900 L380,920 L352,900" fill="none" stroke="#2a2a2a" stroke-width="4"/>
<!-- spikes -->
<path d="M340,690 L385,705 L392,722 L355,730 L340,712 Z M340,770 L385,785 L392,802 L355,808 L340,792 Z" fill="#565656"/>
<!-- lower frame -->
<path d="M42,172 L42,285 L130,370 L150,372 L270,478 L325,445 L320,400 Z" fill="#373737"/>
<path d="M45,205 L135,282 L135,372 L42,287 Z" fill="#464646"/>
<path d="M45,205 L135,282 L135,372" fill="none" stroke="#2a2a2a" stroke-width="3"/>
<!-- barrel side -->
<path d="M45,65 L100,40 L335,290 L310,330 L322,420 L42,172 Z" fill="#3e3e3e"/>
<path d="M42,170 L320,415" stroke="#262626" stroke-width="5"/>
<!-- barrel top -->
<path d="M100,40 L160,35 L175,45 L400,260 L335,290 Z" fill="#4e4e4e"/>
<path d="M100,40 L160,35 L175,45 L118,58 Z" fill="#585858"/>
<path d="M110,60 L125,52 L345,282 L335,290 Z" fill="#363636"/>
<!-- vents -->
<path d="M95,112 L108,106 L112,160 L100,166 Z M128,142 L141,136 L145,192 L133,198 Z M162,176 L175,170 L180,230 L168,236 Z" fill="#646464"/>
<path d="M95,112 L130,128 L128,142 L108,130 Z M128,142 L165,162 L162,176 L141,160 Z M162,176 L195,196 L192,208 L175,196 Z" fill="#5a5a5a"/>
<!-- trigger guard bulge under ring -->
<path d="M312,535 L330,590 L380,608 L432,582 L442,540 Z" fill="#464646"/>
<path d="M312,535 C318,585 350,612 385,606 C410,600 430,585 440,560" fill="none" stroke="#2f2f2f" stroke-width="4"/>
<!-- rear block left side -->
<path d="M330,290 L482,430 L472,500 L442,562 L430,500 L310,330 Z" fill="#383838"/>
<!-- rear block top -->
<path d="M330,290 L430,245 L602,395 L482,430 Z" fill="#535353"/>
<path d="M390,290 L435,275 L500,335 L465,347 Z" fill="#515151"/>
<path d="M465,347 L500,335 L546,366 L476,386 Z" fill="#626262"/>
<path d="M390,290 L465,347 L476,386 L400,320 Z" fill="#434343"/>
<!-- rear block back face -->
<path d="M482,430 L602,395 L613,420 L608,490 L582,496 L578,520 L450,590 L442,562 L472,500 Z" fill="#494949"/>
<path d="M492,448 L596,416" stroke="#363636" stroke-width="3" stroke-dasharray="4 4"/>
<path d="M482,430 L472,500 L442,562" fill="none" stroke="#313131" stroke-width="4"/>
<path d="M480,500 L580,470" stroke="#404040" stroke-width="4"/>
<!-- ring -->
<ellipse cx="378" cy="498" rx="52" ry="88" transform="rotate(-18 378 498)" fill="#525252" stroke="#2c2c2c" stroke-width="3"/>
<ellipse cx="366" cy="500" rx="28" ry="62" transform="rotate(-18 366 500)" fill="#313131"/>
<ellipse cx="358" cy="500" rx="20" ry="52" transform="rotate(-18 358 500)" fill="#444444"/>
</g>
<!-- right 3D gun : crop origin (1260,580) scale 4.31875 -->
<g transform="translate(1260,580) scale(0.231548)" stroke-linejoin="round">
<!-- grip back strip -->
<path d="M1140,345 L1165,345 L1135,480 L1150,560 L1165,650 L1172,820 L1168,882 L1120,895 L1100,490 Z" fill="#424242"/>
<!-- grip side face -->
<path d="M1000,560 L1100,490 L1128,480 L1150,650 L1150,815 L1092,832 L1086,856 L970,882 L970,800 L1035,745 L975,700 L1035,660 L950,600 Z" fill="#4d4d4d"/>
<!-- grip base -->
<path d="M970,882 L1086,856 L1092,832 L1170,812 L1168,882 L970,944 Z" fill="#464646"/>
<path d="M970,882 L1086,856 L1092,832 L1150,815 L1150,650 L1128,480" fill="none" stroke="#2b2b2b" stroke-width="4"/>
<!-- grip front with chevrons -->
<path d="M810,570 L940,545 L1000,560 L950,600 L1035,660 L975,700 L1035,745 L970,800 L970,944 L820,825 L830,770 L815,745 L850,700 L815,670 L850,640 L820,600 Z" fill="#3c3c3c"/>
<path d="M850,640 L950,600 L1035,660 L975,700 L905,650 Z M850,700 L975,700 L1035,745 L970,800 L915,745 L830,770 Z" fill="#545454"/>
<path d="M850,640 L905,650 L975,700 L850,700 L815,670 Z M830,770 L915,745 L970,800 L970,880 L830,800 Z" fill="#464646"/>
<path d="M820,825 L830,800 L970,880 L970,944 Z" fill="#414141"/>
<!-- trigger guard -->
<path d="M805,570 C840,545 900,540 950,545 L1000,560 L930,610 C890,600 840,600 805,570 Z" fill="#565656"/>
<path d="M805,572 C840,600 890,602 930,612" fill="none" stroke="#2f2f2f" stroke-width="5"/>
<!-- lower frame -->
<path d="M280,660 L940,458 L960,520 L830,572 L780,602 L640,642 L510,700 L505,742 L320,796 L300,776 Z" fill="#454545"/>
<path d="M620,612 L640,642 L780,602 L800,575" fill="none" stroke="#2a2a2a" stroke-width="4"/>
<path d="M310,690 L500,640 L505,737 L316,790 Z" fill="#4e4e4e"/>
<path d="M310,690 L500,640 L505,737" fill="none" stroke="#2f2f2f" stroke-width="4"/>
<path d="M285,672 L940,472" stroke="#565656" stroke-width="5"/>
<!-- slide side -->
<path d="M215,465 L335,475 L870,302 L905,290 L940,458 L280,660 L285,545 Z" fill="#4b4b4b"/>
<path d="M283,655 L940,452" stroke="#282828" stroke-width="4" stroke-dasharray="5 5"/>
<path d="M300,610 L935,415" stroke="#383838" stroke-width="4"/>
<!-- vents -->
<path d="M420,465 L500,440 L535,510 L500,522 L480,478 L440,490 L455,530 L425,545 Z M500,440 L575,418 L610,485 L580,495 L560,455 L520,466 Z" fill="#5b5b5b"/>
<path d="M420,465 L440,490 L455,530 L425,545 L418,535 L438,525 Z M500,440 L520,466 L535,510 L500,522 L520,505 Z M575,418 L595,440 L610,485 L580,495 L598,480 Z" fill="#363636"/>
<!-- slide top -->
<path d="M275,430 L810,255 L872,302 L335,476 Z" fill="#575757"/>
<path d="M180,455 L275,430 L335,476 L215,467 Z" fill="#525252"/>
<!-- muzzle face -->
<path d="M180,455 L215,467 L285,545 L280,660 L300,776 L236,782 L160,700 L165,590 L205,580 L210,552 L175,552 Z" fill="#474747"/>
<path d="M215,492 L272,548 L268,652 L285,758 L242,765 L200,700 L205,592 L222,585 L225,550 Z" fill="#323232"/>
<path d="M165,590 L205,580 L280,660 L270,672 L205,600 L170,610 Z" fill="#565656"/>
<!-- rear block side -->
<path d="M890,290 L1200,205 L1216,245 L1196,330 L1165,345 L1140,345 L1128,480 L1100,490 L1000,560 L940,458 L905,290 Z" fill="#4a4a4a"/>
<path d="M1140,345 L1128,480" stroke="#2f2f2f" stroke-width="5"/>
<!-- rear block top -->
<path d="M775,235 L1100,133 L1200,205 L890,292 Z" fill="#585858"/>
<path d="M775,235 L810,255 L872,302 L905,330 L890,292 Z" fill="#363636"/>
<path d="M935,185 L1075,150 L1130,190 L960,245 Z" fill="#525252"/>
<path d="M960,245 L1130,190 L1122,215 L955,252 Z" fill="#626262"/>
<path d="M1075,150 L1105,140 L1195,203 L1130,190 Z" fill="#5c5c5c"/>
<!-- ring -->
<ellipse cx="1030" cy="440" rx="78" ry="74" fill="#555555" stroke="#2c2c2c" stroke-width="4"/>
<ellipse cx="1040" cy="436" rx="44" ry="50" fill="#2f2f2f"/>
<ellipse cx="1030" cy="450" rx="36" ry="38" fill="#484848"/>
<path d="M955,470 L285,668" stroke="#2c2c2c" stroke-width="3" stroke-dasharray="4 4"/>
</g>
<!-- view cube -->
<defs>
<filter id="blur3" x="-50%" y="-50%" width="200%" height="200%"><feGaussianBlur stdDeviation="3.2"/></filter>
<linearGradient id="vcR" x1="0" y1="0" x2="0" y2="1"><stop offset="0" stop-color="#a9b4c3"/><stop offset="1" stop-color="#97a3b4"/></linearGradient>
<linearGradient id="vcL" x1="0" y1="0" x2="0" y2="1"><stop offset="0" stop-color="#a6b1c0"/><stop offset="1" stop-color="#929eaf"/></linearGradient>
</defs>
<path d="M1836,152 L1856,180 L1898,168 L1900,160 L1880,150 Z" fill="#435266" opacity="0.85" filter="url(#blur3)"/>
<path d="M1834.8,116.5 L1876,108.8 L1898,125.6 L1852,135.3 Z" fill="#aab5c3"/>
<path d="M1834.8,116.5 L1852,135.3 L1854,178 L1838,153 Z" fill="url(#vcL)"/>
<path d="M1852,135.3 L1898,125.6 L1896,165 L1854,178 Z" fill="url(#vcR)"/>
<path d="M1834.8,116.5 L1876,108.8 L1898,125.6 L1852,135.3 Z M1852,135.3 L1854,178" fill="none" stroke="#7f8c9e" stroke-width="0.7" stroke-dasharray="5 2"/>
<text transform="matrix(0.98,-0.215,0.03,1,1862,159.5)" font-family="Liberation Sans,sans-serif" font-size="9.4" font-weight="bold" fill="#7d899b" letter-spacing="0.2">RIGHT</text>
<text transform="matrix(0.62,0.36,-0.82,0.36,1862,116.5)" font-family="Liberation Sans,sans-serif" font-size="9" font-weight="bold" fill="#8490a2">TOP</text>
<text transform="matrix(0.36,0.52,0.02,1,1838.5,137)" font-family="Liberation Sans,sans-serif" font-size="8.5" font-weight="bold" fill="#8490a2">FRONT</text>
<!-- axis + camera label -->
<text x="24" y="989" font-family="Liberation Sans,sans-serif" font-size="10" font-weight="bold" fill="#22e022">y</text>
<rect x="26.5" y="992" width="1" height="6" fill="#22e022"/>
<text x="938.5" y="1019.5" font-family="Liberation Sans,sans-serif" font-size="11.5" font-weight="bold" fill="#0c4a1c">persp</text>
</g>
</svg>
<!-- POLY COUNT HUD -->
<div id="hud">
<span class="st sl" style="left:17px;top:88px">Verts:</span><span class="st sv" style="left:101px;top:88px">20313</span><span class="st sv" style="left:190px;top:88px">0</span><span class="st sv" style="left:255px;top:88px">0</span>
<span class="st sl" style="left:16px;top:108px">Edges:</span><span class="st sv" style="left:101px;top:108px">38564</span><span class="st sv" style="left:190px;top:108px">0</span><span class="st sv" style="left:255px;top:108px">0</span>
<span class="st sl" style="left:16px;top:128px">Faces:</span><span class="st sv" style="left:101px;top:128px">18372</span><span class="st sv" style="left:190px;top:128px">0</span><span class="st sv" style="left:255px;top:128px">0</span>
<span class="st sl" style="left:17px;top:148px">Tris:</span><span class="st sv" style="left:101px;top:148px">36280</span><span class="st sv" style="left:190px;top:148px">0</span><span class="st sv" style="left:255px;top:148px">0</span>
<span class="st sl" style="left:16px;top:168px">UVs:</span><span class="st sv" style="left:101px;top:168px">32977</span><span class="st sv" style="left:190px;top:168px">0</span><span class="st sv" style="left:255px;top:168px">0</span>
</div>
<!-- THUMBNAIL STRIP -->
<div class="abs" style="left:0;top:998px;width:800px;height:34px;background:#ebebeb;"></div>
<svg class="abs" style="left:0;top:990px" width="810" height="45" viewBox="0 990 810 45">
<defs><linearGradient id="mayaIc2" x1="0" y1="0" x2="0" y2="1"><stop offset="0" stop-color="#6a7a84"/><stop offset="0.5" stop-color="#1c2428"/><stop offset="1" stop-color="#030303"/></linearGradient></defs>
<rect x="94" y="999" width="58" height="25.6" fill="#bcbcbc"/>
<path d="M117.6,1007 L127.4,1016.4 M127.4,1007 L117.6,1016.4" stroke="#fff" stroke-width="2.2"/>
<rect x="13.7" y="1005.3" width="15" height="18.8" rx="0.8" fill="url(#mayaIc2)"/>
<path d="M16.5,1008 C22,1008.5 26,1012 25.6,1017 C25.2,1021 22.5,1022.6 20.5,1022 C18.5,1021.4 18.2,1019.4 19.6,1018.6 C21,1018.2 22,1019.2 21.6,1020.2 M18.5,1010.5 C21.5,1012 23,1014.5 22.4,1017.2 M17.6,1013.2 C19.2,1013.8 20.2,1015 19.8,1016.8" fill="none" stroke="#e6e6e6" stroke-width="0.9"/>
<path d="M39.5,1004.6 H51.4 V1016.4" fill="none" stroke="#111" stroke-width="1.3"/>
<rect x="37.6" y="1007.6" width="11.8" height="10.6" fill="#ebebeb" stroke="#111" stroke-width="1.3"/><rect x="37" y="1007" width="13" height="2.2" fill="#111"/>
<rect x="69.6" y="1006.8" width="13.8" height="10.6" fill="none" stroke="#111" stroke-width="1.3"/><rect x="69" y="1006.2" width="15" height="2.6" fill="#111"/>
<rect x="159" y="998" width="1" height="34" fill="#c8c8c8"/><rect x="160" y="998" width="1" height="34" fill="#f8f8f8"/>
<rect x="254" y="999" width="58" height="25.6" fill="#bcbcbc"/>
<path d="M277.6,1007 L287.4,1016.4 M287.4,1007 L277.6,1016.4" stroke="#fff" stroke-width="2.2"/>
<rect x="173.7" y="1005.3" width="15" height="18.8" rx="0.8" fill="url(#mayaIc2)"/>
<path d="M176.5,1008 C182,1008.5 186,1012 185.6,1017 C185.2,1021 182.5,1022.6 180.5,1022 C178.5,1021.4 178.2,1019.4 179.6,1018.6 C181,1018.2 182,1019.2 181.6,1020.2 M178.5,1010.5 C181.5,1012 183,1014.5 182.4,1017.2 M177.6,1013.2 C179.2,1013.8 180.2,1015 179.8,1016.8" fill="none" stroke="#e6e6e6" stroke-width="0.9"/>
<path d="M199.5,1004.6 H211.4 V1016.4" fill="none" stroke="#111" stroke-width="1.3"/>
<rect x="197.6" y="1007.6" width="11.8" height="10.6" fill="#ebebeb" stroke="#111" stroke-width="1.3"/><rect x="197" y="1007" width="13" height="2.2" fill="#111"/>
<rect x="229.6" y="1006.8" width="13.8" height="10.6" fill="none" stroke="#111" stroke-width="1.3"/><rect x="229" y="1006.2" width="15" height="2.6" fill="#111"/>
<rect x="319" y="998" width="1" height="34" fill="#c8c8c8"/><rect x="320" y="998" width="1" height="34" fill="#f8f8f8"/>
<rect x="414" y="999" width="58" height="25.6" fill="#bcbcbc"/>
<path d="M437.6,1007 L447.4,1016.4 M447.4,1007 L437.6,1016.4" stroke="#fff" stroke-width="2.2"/>
<rect x="333.7" y="1005.3" width="15" height="18.8" rx="0.8" fill="url(#mayaIc2)"/>
<path d="M336.5,1008 C342,1008.5 346,1012 345.6,1017 C345.2,1021 342.5,1022.6 340.5,1022 C338.5,1021.4 338.2,1019.4 339.6,1018.6 C341,1018.2 342,1019.2 341.6,1020.2 M338.5,1010.5 C341.5,1012 343,1014.5 342.4,1017.2 M337.6,1013.2 C339.2,1013.8 340.2,1015 339.8,1016.8" fill="none" stroke="#e6e6e6" stroke-width="0.9"/>
<path d="M359.5,1004.6 H371.4 V1016.4" fill="none" stroke="#111" stroke-width="1.3"/>
<rect x="357.6" y="1007.6" width="11.8" height="10.6" fill="#ebebeb" stroke="#111" stroke-width="1.3"/><rect x="357" y="1007" width="13" height="2.2" fill="#111"/>
<rect x="389.6" y="1006.8" width="13.8" height="10.6" fill="none" stroke="#111" stroke-width="1.3"/><rect x="389" y="1006.2" width="15" height="2.6" fill="#111"/>
<rect x="479" y="998" width="1" height="34" fill="#c8c8c8"/><rect x="480" y="998" width="1" height="34" fill="#f8f8f8"/>
<rect x="574" y="999" width="58" height="25.6" fill="#bcbcbc"/>
<path d="M597.6,1007 L607.4,1016.4 M607.4,1007 L597.6,1016.4" stroke="#fff" stroke-width="2.2"/>
<rect x="493.7" y="1005.3" width="15" height="18.8" rx="0.8" fill="url(#mayaIc2)"/>
<path d="M496.5,1008 C502,1008.5 506,1012 505.6,1017 C505.2,1021 502.5,1022.6 500.5,1022 C498.5,1021.4 498.2,1019.4 499.6,1018.6 C501,1018.2 502,1019.2 501.6,1020.2 M498.5,1010.5 C501.5,1012 503,1014.5 502.4,1017.2 M497.6,1013.2 C499.2,1013.8 500.2,1015 499.8,1016.8" fill="none" stroke="#e6e6e6" stroke-width="0.9"/>
<path d="M519.5,1004.6 H531.4 V1016.4" fill="none" stroke="#111" stroke-width="1.3"/>
<rect x="517.6" y="1007.6" width="11.8" height="10.6" fill="#ebebeb" stroke="#111" stroke-width="1.3"/><rect x="517" y="1007" width="13" height="2.2" fill="#111"/>
<rect x="549.6" y="1006.8" width="13.8" height="10.6" fill="none" stroke="#111" stroke-width="1.3"/><rect x="549" y="1006.2" width="15" height="2.6" fill="#111"/>
<rect x="639" y="998" width="1" height="34" fill="#c8c8c8"/><rect x="640" y="998" width="1" height="34" fill="#f8f8f8"/>
<rect x="734" y="999" width="58" height="25.6" fill="#bcbcbc"/>
<path d="M757.6,1007 L767.4,1016.4 M767.4,1007 L757.6,1016.4" stroke="#fff" stroke-width="2.2"/>
<rect x="653.7" y="1005.3" width="15" height="18.8" rx="0.8" fill="url(#mayaIc2)"/>
<path d="M656.5,1008 C662,1008.5 666,1012 665.6,1017 C665.2,1021 662.5,1022.6 660.5,1022 C658.5,1021.4 658.2,1019.4 659.6,1018.6 C661,1018.2 662,1019.2 661.6,1020.2 M658.5,1010.5 C661.5,1012 663,1014.5 662.4,1017.2 M657.6,1013.2 C659.2,1013.8 660.2,1015 659.8,1016.8" fill="none" stroke="#e6e6e6" stroke-width="0.9"/>
<path d="M679.5,1004.6 H691.4 V1016.4" fill="none" stroke="#111" stroke-width="1.3"/>
<rect x="677.6" y="1007.6" width="11.8" height="10.6" fill="#ebebeb" stroke="#111" stroke-width="1.3"/><rect x="677" y="1007" width="13" height="2.2" fill="#111"/>
<rect x="709.6" y="1006.8" width="13.8" height="10.6" fill="none" stroke="#111" stroke-width="1.3"/><rect x="709" y="1006.2" width="15" height="2.6" fill="#111"/>
</svg>
<!-- TASKBAR -->
<div class="abs" style="left:0;top:1031px;width:1920px;height:1px;background:#5c5c5c;"></div>
<div id="taskbar" class="abs"></div>
<div class="abs" style="left:1332px;top:1032px;width:563px;height:48px;background:#6a9798;"></div>
<!-- active / highlighted buttons -->
<div class="tbtn" style="left:176px;width:60px;"></div><div class="tbtn" style="left:238px;width:3px;"></div>
<div class="tbtn" style="left:246px;width:65px;"></div>
<div class="tbtn act" style="left:736px;width:60px;"></div><div class="tbtn act" style="left:798px;width:3px;"></div>
<div class="tbtn" style="left:1226px;width:65px;"></div>
<div class="tbtn" style="left:1296px;width:65px;"></div>
<div class="tbtn" style="left:1366px;width:65px;"></div>
<!-- watermark text -->
<div class="abs" style="left:1341px;top:1029px;font-family:'Liberation Serif',serif;font-style:italic;font-size:21.5px;line-height:30px;color:rgba(62,112,150,0.8);white-space:nowrap;letter-spacing:2.3px;">Yakuza86as!</div>
<div id="quote" class="abs" style="left:1340px;top:1059.5px;font-size:16.6px;line-height:22px;color:#3c6a86;white-space:nowrap;">stay away from negative people: they have a problem for every solution</div>
<div class="abs" style="left:1895px;top:1032px;width:25px;height:48px;background:#3a809c;"></div>
<!-- tray text -->
<div class="abs" style="left:1584px;top:1046px;font-size:15px;line-height:18px;color:#fff;white-space:nowrap;">Desktop</div>
<div class="abs" style="left:1820px;top:1037px;width:66.5px;text-align:right;font-size:14.2px;line-height:18px;color:#fff;white-space:nowrap;">2:31 PM</div>
<div class="abs" style="left:1820px;top:1059px;width:71px;text-align:right;font-size:14.6px;letter-spacing:0.35px;line-height:18px;color:#fff;white-space:nowrap;">1/6/2016</div>
<div class="abs" style="left:1675px;top:1034px;font-size:14px;line-height:16px;color:#fff;">»</div>
<!-- TASKBAR ICONS -->
<svg class="abs" style="left:0;top:1032px" width="1920" height="48" viewBox="0 1032 1920 48">
<defs>
<linearGradient id="ieB" x1="0" y1="0" x2="0" y2="1"><stop offset="0" stop-color="#7fe0ff"/><stop offset="0.5" stop-color="#2ab0ee"/><stop offset="1" stop-color="#1a8cd8"/></linearGradient>
<linearGradient id="folderY" x1="0" y1="0" x2="0" y2="1"><stop offset="0" stop-color="#fff0a8"/><stop offset="1" stop-color="#f0c848"/></linearGradient>
<linearGradient id="folderB" x1="0" y1="0" x2="0" y2="1"><stop offset="0" stop-color="#b8e4fa"/><stop offset="1" stop-color="#3aa0dc"/></linearGradient>
<linearGradient id="zbG" x1="0" y1="0" x2="0" y2="1"><stop offset="0" stop-color="#ffffff"/><stop offset="1" stop-color="#dcdcdc"/></linearGradient>
<linearGradient id="acro" x1="0" y1="0" x2="0" y2="1"><stop offset="0" stop-color="#f01010"/><stop offset="1" stop-color="#8c0000"/></linearGradient>
<linearGradient id="steamG" x1="0" y1="0" x2="0" y2="1"><stop offset="0" stop-color="#101a3c"/><stop offset="0.55" stop-color="#163a74"/><stop offset="1" stop-color="#1c8ad0"/></linearGradient>
<linearGradient id="mayaBg" x1="0" y1="0" x2="0" y2="1"><stop offset="0" stop-color="#fafafa"/><stop offset="1" stop-color="#cfe6e6"/></linearGradient>
<linearGradient id="mayaOld" x1="0" y1="0" x2="1" y2="1"><stop offset="0" stop-color="#586870"/><stop offset="0.5" stop-color="#20282c"/><stop offset="1" stop-color="#040404"/></linearGradient>
<radialGradient id="gameG" cx="0.5" cy="0.55" r="0.6"><stop offset="0" stop-color="#4c9a9a"/><stop offset="0.6" stop-color="#1c3a40"/><stop offset="1" stop-color="#0a1214"/></radialGradient>
<linearGradient id="calcG" x1="0" y1="0" x2="0" y2="1"><stop offset="0" stop-color="#dcecfa"/><stop offset="1" stop-color="#8cb4dc"/></linearGradient>
<linearGradient id="noteY" x1="0" y1="0" x2="1" y2="1"><stop offset="0" stop-color="#fff4a0"/><stop offset="1" stop-color="#f4d040"/></linearGradient>
<g id="grip"><path d="M0,0h2v2h-2zM4,0h2v2h-2zM8,0h2v2h-2z" /></g>
<g id="zbrush">
<rect x="0" y="0" width="40" height="40" rx="3" fill="url(#zbG)"/>
<circle cx="22.5" cy="6.5" r="2.6" fill="#111"/>
<path d="M6,14.5 C11,10 18,9.5 23,11.5 C27,13 30,12 32,10.5 M23,11.5 C22,17 17,21 11,25 C6,28.5 2.5,31 3.5,32.5 C6,33 16,26 22,22 C27,21.5 31,25 34,30 C35.5,32.5 36.5,33 37,32 M12,24 C16,23 20,22 22,22" fill="none" stroke="#111" stroke-width="2" stroke-linecap="round" stroke-linejoin="round"/>
</g>
<g id="unity">
<path d="M-0.3,18.7 L11.5,10.2 L13,11.6 L29.4,0 L33.5,0.5 L35.2,8 L37.2,15.1 L37.7,22.4 L35.4,30 L33.5,37 L29.4,38 L13,26.6 L11.6,27.6 Z" fill="#1c1c1c"/>
<path d="M8.5,16.6 L28.3,5.2 L22.6,16.6 Z" fill="#f0f0f0"/>
<path d="M15,12.9 L28.3,5.2 L25,11.8 Z" fill="#c4c4c4"/>
<path d="M9.1,20.8 L22.6,20.8 L28.3,33.3 Z" fill="#fafafa"/>
<path d="M30.4,8.8 L34.6,18.2 L30.9,29.1 L25.2,18.7 Z" fill="#f6f6f6"/>
<path d="M30.4,8.8 L34.6,18.2 L31.5,18.4 L27.6,14 Z" fill="#cfcfcf"/>
</g>
<g id="mayaNew">
<rect x="0" y="0" width="40" height="40" fill="url(#mayaBg)"/>
<rect x="0" y="29.5" width="40" height="10.5" fill="#bfe4e4" opacity="0.7"/>
<path d="M4.2,11.1 L11.5,14.8 L11.5,30.4 L4.2,30.4 Z" fill="#22e2e2"/>
<path d="M4.2,11.1 L19.3,2.8 L11.5,14.8 Z" fill="#1cc4c4"/>
<path d="M19.3,2.8 L11.5,14.8 L19.3,19 Z" fill="#0e8a8c"/>
<path d="M19.3,2.8 L19.3,19 L27.1,14.8 Z" fill="#0a6e72"/>
<path d="M19.3,2.8 L34.4,11.1 L27.1,14.8 Z" fill="#12969a"/>
<path d="M27.1,14.8 L34.4,11.1 L34.4,29.9 L27.1,29.9 Z" fill="#18b0b2"/>
<path d="M11.5,14.8 L19.3,19 L27.1,14.8 L27.1,22.1 L19.3,28.9 L11.5,22.1 Z" fill="#14a6a8"/>
<path d="M11.5,14.8 L19.3,19 L19.3,28.9 L11.5,22.1 Z" fill="#1ad0d2"/>
<rect x="14" y="31.4" width="26" height="8.6" fill="#f4f4f4" opacity="0.92"/>
<text x="39" y="39" font-family="Liberation Sans,sans-serif" font-size="8.5" font-weight="bold" text-anchor="end" fill="#707070" letter-spacing="-0.25">MAYA</text>
</g>
</defs>
<!-- grip left -->
<g fill="#0c1c24"><use href="#grip" x="15.5" y="1038"/><use href="#grip" x="15.5" y="1045"/><use href="#grip" x="15.5" y="1052"/><use href="#grip" x="15.5" y="1059"/><use href="#grip" x="15.5" y="1066"/><use href="#grip" x="15.5" y="1073"/></g>
<!-- IE -->
<g>
<g transform="translate(1.5,-2.9)"><path d="M83.8,1058.5 A15.4,15.4 0 1 0 82,1066.5 L74.2,1066.5 A8.2,8.2 0 0 1 61.2,1058.5 Z M61.4,1052.6 A7.6,7.6 0 0 1 75.8,1052.6 Z" fill="url(#ieB)" fill-rule="evenodd"/></g><g transform="translate(1,-1.6)">
<path d="M55,1075 C46,1072 50,1056 64,1045 C75,1036.5 87,1036 86.5,1043.5 C85.5,1039.5 78,1040.5 69,1047 C58,1055 51.5,1068 55,1075 Z" fill="#f2b81c"/>
<path d="M86.5,1043.5 C86.6,1046 85.6,1048.6 84.6,1050.4 L82.8,1048.6 C83.8,1046.6 84,1044.8 83.4,1043.6 Z" fill="#f2b81c"/>
</g></g>
<!-- Unity 1 -->
<use href="#unity" x="120" y="1036.8"/>
<!-- Explorer -->
<g>
<path d="M187,1039.5 L198,1039.5 L200,1042 L224.5,1042 L224.5,1070 L187,1070 Z" fill="#e8c458"/>
<path d="M192,1038.5 h8 v3 h-8z" fill="#f8f8f8"/><rect x="192.6" y="1039" width="2" height="1.6" fill="#2a9a3a"/>
<path d="M200.5,1041 h9 v3 h-9z" fill="#f8f8f8"/><rect x="201" y="1041.5" width="2" height="1.6" fill="#d03030"/>
<path d="M210.5,1043 h9 v3 h-9z" fill="#f8f8f8"/><rect x="211" y="1043.5" width="2" height="1.6" fill="#2a7ad0"/>
<path d="M187,1046 L225,1046 L225,1072.5 L187,1072.5 Z" fill="url(#folderY)" stroke="#d8a830" stroke-width="0.6"/>
<path d="M192,1061 Q192,1059 194,1059 L218,1059 Q220,1059 220,1061 L220,1074 L213,1074 L213,1068 L199.5,1068 L199.5,1074 L192,1074 Z" fill="url(#folderB)" stroke="#2a88c8" stroke-width="0.6"/>
</g>
<!-- Chrome -->
<g>
<circle cx="279" cy="1056" r="18.4" fill="#dd4b3e"/>
<path d="M279,1056 L263.1,1046.8 A18.4,18.4 0 0 0 279,1074.4 Z" fill="#1da462"/>
<path d="M279,1056 L263.06,1046.8 A18.4,18.4 0 0 0 286.9,1072.6 L279,1056 Z" fill="#1da462"/>
<path d="M279,1056 L297.4,1056 A18.4,18.4 0 0 1 279,1074.4 L286.9,1072.6 Z" fill="#ffcd46"/>
<path d="M279,1047.6 L295.4,1047.6 A18.4,18.4 0 0 1 286.2,1072.9 L279,1074.4 L287.2,1060 Z" fill="#ffcd46"/>
<path d="M263.06,1046.8 A18.4,18.4 0 0 1 295.4,1047.6 L279,1047.6 L271.4,1060.6 Z" fill="#dd4b3e"/>
<circle cx="279" cy="1056" r="8.6" fill="#f4f4f4"/>
<circle cx="279" cy="1056" r="6.8" fill="#4688f4"/>
</g>
<!-- ZBrush 1 -->
<use href="#zbrush" x="329" y="1036"/>
<!-- Ps -->
<g>
<rect x="400.5" y="1037" width="36.5" height="35" fill="#78b4f4"/>
<rect x="403" y="1039.5" width="31.5" height="30" fill="#0e0e62"/>
<text x="418.8" y="1064" font-family="Liberation Sans,sans-serif" font-size="21" font-weight="bold" text-anchor="middle" fill="#82bcff" letter-spacing="-0.5">Ps</text>
</g>
<!-- Unity 2 -->
<use href="#unity" x="471" y="1036.8"/>
<!-- Ae -->
<g>
<rect x="540.5" y="1037" width="36.5" height="35" fill="#c89cf4"/>
<rect x="543" y="1039.5" width="31.5" height="30" fill="#1c0e52"/>
<text x="559" y="1064" font-family="Liberation Sans,sans-serif" font-size="21" font-weight="bold" text-anchor="middle" fill="#cc9cff" letter-spacing="-0.5">Ae</text>
</g>
<!-- game icon -->
<g>
<circle cx="628.6" cy="1055.2" r="18.4" fill="#060a0c" stroke="#cfcfcf" stroke-width="1"/>
<path d="M620.5,1046 C623,1041.5 636,1041.5 638.6,1046 C643,1053 641,1062 638,1067 C636,1071 632,1073 627,1072.6 C622,1072 619.6,1068 620,1062 C619,1056 618.6,1050 620.5,1046 Z" fill="#2a5058"/>
<path d="M622,1050 C625,1047 633,1047 637,1050 C640,1056 638,1064 634,1069 C631,1072 626,1071 624,1067 C622,1062 620.6,1055 622,1050 Z" fill="#5c97a0"/>
<path d="M625,1056 C627,1060 626,1066 628,1071 M630,1056 C630,1062 631,1066 633,1069 M627.6,1049 L628.6,1057" stroke="#b4e0e6" stroke-width="1.5" fill="none"/>
<path d="M621,1047.6 C624,1046 627,1047 628.6,1049 M637.6,1048 C634.6,1046.6 631.6,1047.4 630,1049.6" stroke="#d8e6e8" stroke-width="1.2" fill="none"/>
<ellipse cx="623.8" cy="1051.4" rx="2.5" ry="1.7" transform="rotate(20 623.8 1051.4)" fill="#f4a410"/><ellipse cx="633.2" cy="1051.6" rx="2.8" ry="1.8" transform="rotate(-20 633.2 1051.6)" fill="#f4a410"/>
<path d="M636,1054 C640,1053 642,1057 640,1060 C638,1059 637,1056 636,1054 Z" fill="#4a8088"/>
</g>
<!-- Maya new 1 -->
<use href="#mayaNew" x="679" y="1036"/>
<!-- Maya old (active) -->
<g>
<rect x="751.3" y="1036.8" width="28.8" height="36.4" rx="1.8" fill="url(#mayaOld)"/>
<path d="M751.3,1050 L780.1,1040 L780.1,1046 L751.3,1058 Z" fill="#8aa0a8" opacity="0.12"/>
<g transform="translate(600,1030) scale(0.1041667)" fill="none" stroke="#f2f2f2" stroke-width="17" stroke-linecap="round" stroke-linejoin="round">
<path d="M1492,112 C1600,120 1700,220 1692,325 C1686,372 1640,392 1600,376 C1556,358 1560,306 1600,294 C1636,286 1662,318 1640,344"/>
<path d="M1575,160 C1625,205 1650,255 1632,300"/>
<path d="M1575,160 C1560,190 1530,200 1525,235 C1522,265 1540,285 1560,290 C1550,260 1575,245 1580,215"/>
<path d="M1492,112 C1530,130 1555,145 1575,160"/>
</g>
</g>
<!-- ZBrush 2 -->
<use href="#zbrush" x="819" y="1036"/>
<!-- Steam -->
<g>
<circle cx="908.7" cy="1055.4" r="20" fill="url(#steamG)"/>
<path d="M888.8,1054.6 L900.6,1059.6 C902.4,1058 905,1057.6 907,1058.2 L911.4,1052.6 C909,1047 913,1042.6 917,1043 C922,1043.4 924.6,1048 922.6,1053 C921,1056.6 917,1058 914,1057.2 L908.6,1062.6 C908.8,1066.6 905,1069.4 901.4,1068.4 C898.6,1067.6 897.2,1065.6 897,1063.6 L889.2,1060.4 Z" fill="#dfe9ef"/>
<circle cx="916" cy="1050" r="7" fill="#c4d6e0"/>
<circle cx="916" cy="1050" r="4.5" fill="#d4e2ea" stroke="#1a2c64" stroke-width="1.4"/>
<circle cx="902.6" cy="1063.2" r="3.7" fill="none" stroke="#2a4a8c" stroke-width="0.9"/>
<circle cx="902" cy="1062.6" r="2.8" fill="#ffffff"/>
</g>
<!-- Acrobat -->
<g>
<rect x="960" y="1037" width="37" height="34.8" fill="url(#acro)"/>
<path d="M967,1066.5 C965,1064 971,1059.5 978,1057 C986,1054.4 992.6,1055.4 992.4,1058.2 C992,1060.6 985,1059.4 980,1054.6 C975.6,1050.2 974.4,1043.6 976.6,1042.6 C979.2,1041.8 979.6,1048.6 977.4,1054.8 C975,1061.4 969.6,1068.4 967,1066.5 Z" fill="none" stroke="#fff" stroke-width="1.5"/>
</g>
<!-- WordPad -->
<g>
<path d="M1034,1040 L1064.6,1040 L1066,1073 L1033,1073 Z" fill="#f8fbff" stroke="#9ab4d4" stroke-width="0.8"/>
<rect x="1033.6" y="1037.4" width="31.2" height="3.6" fill="#86a8dc" stroke="#5a80bc" stroke-width="0.5"/>
<text x="1044.4" y="1058" font-family="Liberation Serif,serif" font-size="19" font-weight="bold" text-anchor="middle" fill="#f09030">A</text>
<path d="M1052,1048.5h9M1052,1051h9M1052,1053.5h9" stroke="#4a78d0" stroke-width="1.2"/>
<path d="M1037,1062h23M1037,1064.6h20M1037,1067.2h22" stroke="#b4c4d8" stroke-width="0.9"/>
<path d="M1033.4,1070 L1065.8,1070 L1066,1074.4 L1033,1074.4 Z" fill="#c4d8f0"/>
</g>
<!-- Maya new 2 -->
<use href="#mayaNew" x="1099" y="1036"/>
<!-- Calculator -->
<g>
<rect x="1175" y="1037.5" width="27.5" height="37.2" rx="2" fill="url(#calcG)" stroke="#5a84b8" stroke-width="0.8"/>
<rect x="1178" y="1040.6" width="21.5" height="10.8" fill="#e4f0fc" stroke="#6a8cc0" stroke-width="0.7"/>
<rect x="1178.4" y="1041" width="20.7" height="1.6" fill="#f0a030"/>
<text x="1197.6" y="1050.2" font-family="Liberation Mono,monospace" font-size="8" text-anchor="end" fill="#3a5a9a">0</text>
<g fill="#f4f8fc" stroke="#7a9cc8" stroke-width="0.4">
<rect x="1178" y="1054.6" width="3.4" height="2.8"/><rect x="1182.5" y="1054.6" width="3.4" height="2.8"/><rect x="1187" y="1054.6" width="3.4" height="2.8"/><rect x="1191.5" y="1054.6" width="3.4" height="2.8"/><rect x="1196" y="1054.6" width="3.4" height="2.8"/>
<rect x="1178" y="1059.2" width="3.4" height="2.8"/><rect x="1182.5" y="1059.2" width="3.4" height="2.8"/><rect x="1187" y="1059.2" width="3.4" height="2.8"/><rect x="1191.5" y="1059.2" width="3.4" height="2.8"/><rect x="1196" y="1059.2" width="3.4" height="2.8"/>
<rect x="1178" y="1063.8" width="3.4" height="2.8"/><rect x="1182.5" y="1063.8" width="3.4" height="2.8"/><rect x="1187" y="1063.8" width="3.4" height="2.8"/><rect x="1191.5" y="1063.8" width="3.4" height="2.8"/>
<rect x="1178" y="1068.4" width="3.4" height="2.8"/><rect x="1182.5" y="1068.4" width="3.4" height="2.8"/><rect x="1187" y="1068.4" width="3.4" height="2.8"/><rect x="1191.5" y="1068.4" width="3.4" height="2.8"/>
</g>
<rect x="1196" y="1063.8" width="3.4" height="7.4" fill="#f09828" stroke="#c07010" stroke-width="0.4"/>
</g>
<!-- Sticky notes -->
<g>
<path d="M1246,1040.5 L1262,1044.5 L1256,1063 L1240,1058 Z" fill="#a8e090" stroke="#7ac060" stroke-width="0.5"/>
<rect x="1247.5" y="1046" width="16" height="20" fill="#98c4f4" stroke="#6a9cd8" stroke-width="0.5"/>
<path d="M1251.5,1052.5 L1270.5,1045 L1277.5,1063.5 L1259,1070.8 Z" fill="url(#noteY)" stroke="#d8b430" stroke-width="0.5"/>
</g>
<!-- Skype -->
<g>
<circle cx="1320" cy="1047" r="9" fill="#00aff0"/><circle cx="1336.5" cy="1063.5" r="9" fill="#00aff0"/><circle cx="1328.3" cy="1055" r="16" fill="#00aff0"/>
<text x="1328.4" y="1067.6" font-family="Liberation Sans,sans-serif" font-size="34" font-weight="bold" text-anchor="middle" fill="#fff">S</text>
</g>
<!-- Upwork -->
<g>
<circle cx="1399" cy="1055.8" r="20" fill="#6fda44"/>
<path d="M1387.6,1049.5 V1056.5 A4.2,4.2 0 0 0 1396,1056.5 V1049.5 M1398.6,1069 L1401,1056.5 A4.9,4.9 0 1 1 1405.6,1061.6 C1403.6,1061.6 1401.8,1060.4 1400.6,1058.6" fill="none" stroke="#fff" stroke-width="2.9" stroke-linecap="butt"/>
</g>
<!-- gold ring -->
<g transform="translate(0,1055.5) scale(1,0.85) translate(0,-1055.5)">
<path d="M1460.5,1038.5 L1476.5,1038.5 L1485,1047 L1486,1060 L1478.5,1071 L1463,1072.5 L1452,1064 L1450.6,1050 Z" fill="#d89a2c" stroke="#7a4c10" stroke-width="1"/>
<path d="M1462,1041.6 L1475,1041.6 L1481.6,1048.4 L1482.4,1058.6 L1476,1067 L1464,1068 L1455.4,1061.6 L1454.6,1051 Z" fill="#8c6c34"/>
<path d="M1468,1050 L1476,1044 L1481.6,1048.4 L1482.4,1058.6 L1476,1067 L1468,1066 Z" fill="#b08a44"/>
<path d="M1460.5,1038.5 L1462,1041.6 M1476.5,1038.5 L1475,1041.6 M1485,1047 L1481.6,1048.4 M1486,1060 L1482.4,1058.6 M1478.5,1071 L1476,1067 M1463,1072.5 L1464,1068 M1452,1064 L1455.4,1061.6 M1450.6,1050 L1454.6,1051" stroke="#7a4c10" stroke-width="0.8"/>
<path d="M1461,1039.2 L1476,1039.2" stroke="#ffd878" stroke-width="1.2"/>
</g>
<!-- tray grip -->
<g fill="#10242c"><use href="#grip" x="1567.6" y="1038"/><use href="#grip" x="1567.6" y="1045"/><use href="#grip" x="1567.6" y="1052"/><use href="#grip" x="1567.6" y="1059"/><use href="#grip" x="1567.6" y="1066"/><use href="#grip" x="1567.6" y="1073"/></g>
<!-- small folder -->
<g>
<path d="M1646.5,1042 L1653,1042 L1654,1043.4 L1666,1043.4 L1666,1057 L1646.5,1057 Z" fill="#e8c458"/>
<rect x="1649" y="1041.4" width="4" height="1.6" fill="#f8f8f8"/><rect x="1649.3" y="1041.6" width="1" height="1" fill="#2a9a3a"/>
<rect x="1654" y="1042.6" width="4.4" height="1.6" fill="#f8f8f8"/><rect x="1654.3" y="1042.8" width="1" height="1" fill="#d03030"/>
<rect x="1659" y="1043.6" width="4.4" height="1.6" fill="#f8f8f8"/><rect x="1659.3" y="1043.8" width="1" height="1" fill="#2a7ad0"/>
<rect x="1646.5" y="1045.4" width="19.8" height="12.8" fill="url(#folderY)" stroke="#d8a830" stroke-width="0.4"/>
<path d="M1649.4,1052.6 h14 v6 h-3.6 v-3 h-6.8 v3 h-3.6 Z" fill="url(#folderB)" stroke="#2a88c8" stroke-width="0.4"/>
</g>
<!-- tray triangle -->
<path d="M1701,1059.6 L1706.5,1053.6 L1712,1059.6 Z" fill="#fff"/>
<!-- signal -->
<g fill="#fff"><rect x="1730.4" y="1061" width="2.4" height="4"/><rect x="1734" y="1057.6" width="2.4" height="7.4"/><rect x="1737.6" y="1054.2" width="2.4" height="10.8"/><rect x="1741.2" y="1051" width="2.4" height="14"/><path d="M1744.6,1049 h1.6 v16 h-1.6z"/></g>
<!-- battery plug -->
<g>
<path d="M1762,1048 V1052 M1765.6,1048 V1052" stroke="#fff" stroke-width="1.4"/>
<path d="M1760.8,1052 H1766.8 V1055 Q1766.8,1057.4 1764.6,1057.6 V1065.6 H1763 V1057.6 Q1760.8,1057.4 1760.8,1055 Z" fill="#fff"/>
<rect x="1769" y="1050" width="9" height="14.6" rx="1" fill="none" stroke="#fff" stroke-width="1.6"/>
<rect x="1771.6" y="1047.8" width="3.8" height="2" fill="#fff"/>
<rect x="1771" y="1052" width="5" height="10.6" fill="#fff"/>
</g>
<!-- speaker -->
<g>
<path d="M1791.4,1053.4 H1794.4 L1799,1048.6 V1065.6 L1794.4,1060.8 H1791.4 Z" fill="none" stroke="#fff" stroke-width="1.3" stroke-linejoin="round"/>
<path d="M1794.6,1053.6 L1798.6,1049.6 V1064.6 L1794.6,1060.6 Z" fill="#fff"/>
<path d="M1805.6,1053.4 Q1807.6,1057 1805.6,1060.6" fill="none" stroke="#fff" stroke-width="1"/>
</g>
</svg>
</div>
</body>
</html>
